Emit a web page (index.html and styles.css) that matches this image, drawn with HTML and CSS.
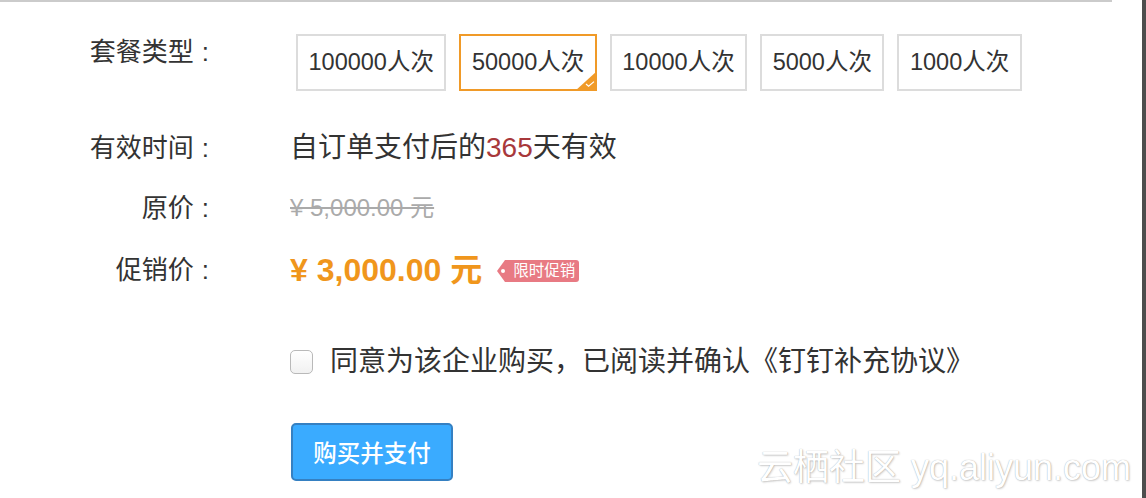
FILE: index.html
```html
<!DOCTYPE html>
<html lang="zh-CN">
<head>
<meta charset="utf-8">
<link rel="stylesheet" href="styles.css">
</head>
<body>
<div class="topline"></div>
<div class="form">
  <div class="row row-type">
    <div class="label">套餐类型<span class="colon">:</span></div>
    <div class="value options">
      <div class="opt">100000人次</div>
      <div class="opt selected">50000人次<span class="corner"><svg class="check" width="10" height="6" viewBox="0 0 10 6"><path d="M1 3 L3.6 5.2 L9 0.6" fill="none" stroke="#fff" stroke-width="1.2"/></svg></span></div>
      <div class="opt">10000人次</div>
      <div class="opt">5000人次</div>
      <div class="opt">1000人次</div>
    </div>
  </div>
  <div class="row row-time">
    <div class="label">有效时间<span class="colon">:</span></div>
    <div class="value text-main">自订单支付后的<span class="days">365</span>天有效</div>
  </div>
  <div class="row row-orig">
    <div class="label">原价<span class="colon">:</span></div>
    <div class="value orig-price">¥ 5,000.00 元</div>
  </div>
  <div class="row row-promo">
    <div class="label">促销价<span class="colon">:</span></div>
    <div class="value promo">
      <span class="promo-price">¥ 3,000.00 元</span>
      <span class="tag">限时促销</span>
    </div>
  </div>
  <div class="row row-agree">
    <div class="label"></div>
    <div class="value agree">
      <span class="checkbox"></span>
      <span class="agree-text">同意为该企业购买，已阅读并确认《钉钉补充协议》</span>
    </div>
  </div>
  <div class="row row-btn">
    <div class="label"></div>
    <div class="value">
      <button class="buy">购买并支付</button>
    </div>
  </div>
</div>
<div class="watermark">云栖社区 yq.aliyun.com</div>
<div class="edge"></div>
</body>
</html>
```

FILE: styles.css
```css
html, body {
  margin: 0;
  padding: 0;
  background: #fff;
}
body {
  width: 1146px;
  height: 498px;
  overflow: hidden;
  position: relative;
  font-family: "Liberation Sans", "Noto Sans CJK SC", sans-serif;
  color: #333;
}
.topline {
  width: 1112px;
  height: 2px;
  background: #cbcbcb;
}
.form {
  display: flex;
  flex-direction: column;
}
.row {
  display: flex;
  align-items: flex-start;
}
.label {
  width: 213px;
  flex: none;
  box-sizing: border-box;
  padding-right: 4px;
  text-align: right;
  font-size: 26px;
  line-height: 36px;
  color: #333;
}
.colon {
  padding-left: 8px;
}
.value {
  margin-left: 77px;
  line-height: 36px;
}
.row-type { margin-top: 32px; }
.options {
  display: flex;
  gap: 13px;
  margin-left: 83px;
}
.opt {
  position: relative;
  box-sizing: border-box;
  height: 57px;
  border: 2px solid #dcdcdc;
  padding: 0 10.5px;
  font-size: 23.5px;
  line-height: 53px;
  color: #333;
  white-space: nowrap;
}
.opt.selected {
  border-color: #f09a28;
}
.corner {
  position: absolute;
  right: -2px;
  bottom: -2px;
  width: 0;
  height: 0;
  border-left: 22px solid transparent;
  border-bottom: 20px solid #f09a28;
}
.check {
  position: absolute;
  left: -12px;
  top: 10px;
}
.row-time { margin-top: 39px; }
.text-main {
  font-size: 28px;
}
.days { color: #a8383b; }
.row-orig { margin-top: 24px; }
.orig-price {
  font-size: 24px;
  color: #aaa;
  text-decoration: line-through;
}
.row-promo { margin-top: 26px; }
.promo {
  display: flex;
  align-items: center;
}
.promo-price {
  font-size: 32px;
  font-weight: bold;
  color: #f0961c;
}
.tag {
  position: relative;
  margin-left: 23px;
  margin-top: 2px;
  height: 22px;
  line-height: 22px;
  padding: 0 4px 0 8px;
  background: #e87a83;
  color: #fff;
  font-size: 15.5px;
  border-radius: 0 3px 3px 0;
}
.tag::before {
  content: "";
  position: absolute;
  left: -8px;
  top: 0;
  width: 0;
  height: 0;
  border-top: 11px solid transparent;
  border-bottom: 11px solid transparent;
  border-right: 8px solid #e87a83;
}
.tag::after {
  content: "";
  position: absolute;
  left: -4px;
  top: 9px;
  width: 4px;
  height: 4px;
  border-radius: 50%;
  background: #fff;
}
.row-agree { margin-top: 56px; }
.agree {
  display: flex;
  align-items: center;
  height: 36px;
}
.checkbox {
  box-sizing: border-box;
  width: 23px;
  height: 24px;
  border: 1px solid #b9b9b9;
  border-radius: 5px;
  background: linear-gradient(#fff, #f1f1f1);
}
.agree-text {
  margin-left: 17px;
  font-size: 28px;
  color: #333;
}
.row-btn { margin-top: 43px; }
.buy {
  display: block;
  box-sizing: border-box;
  width: 162px;
  height: 58px;
  margin-left: 1px;
  border: 2px solid #3580c2;
  border-radius: 5px;
  background: #3aabff;
  color: #fff;
  font-family: "Liberation Sans", "Noto Sans CJK SC", sans-serif;
  font-size: 23.5px;
  font-weight: 500;
  padding: 0;
}
.watermark {
  position: absolute;
  left: 757px;
  top: 446px;
  font-size: 36px;
  line-height: 44px;
  color: #fff;
  white-space: nowrap;
  text-shadow: 0 0 1px rgba(0,0,0,0.35), 1px 1px 2px rgba(0,0,0,0.18);
}
.edge {
  position: absolute;
  right: 0;
  top: 0;
  width: 4px;
  height: 498px;
  background: #4d4d4d;
}
```
